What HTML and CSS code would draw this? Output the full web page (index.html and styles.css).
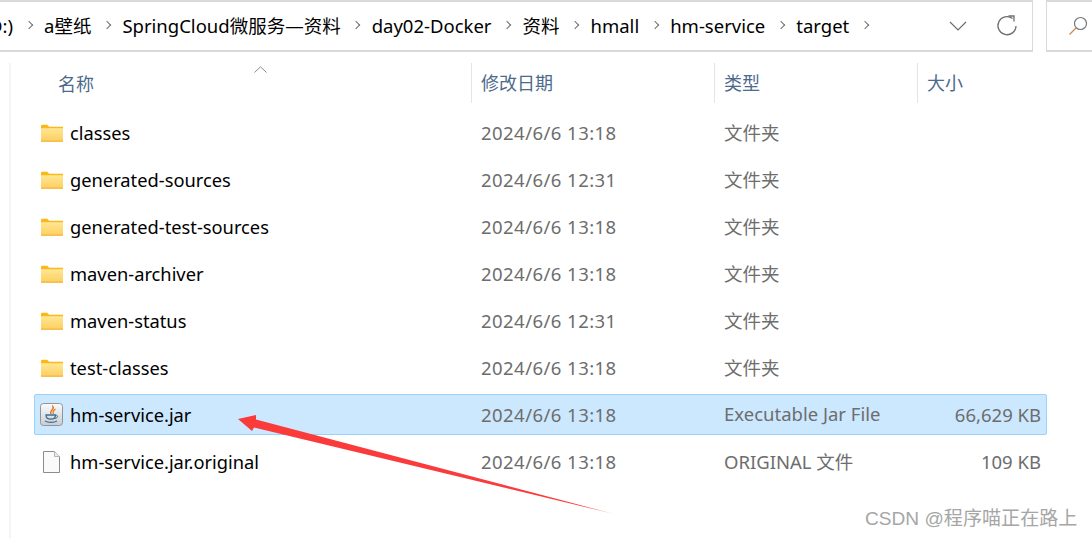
FILE: index.html
```html
<!DOCTYPE html>
<html lang="zh-CN">
<head>
    <meta charset="UTF-8">
    <title>target</title>
    <link rel="stylesheet" href="styles.css">
</head>
<body>
    <svg width="0" height="0" class="defs">
        <defs>
            <linearGradient id="folderFill" x1="0" y1="0" x2="0" y2="1">
                <stop offset="0" stop-color="#ffe795"/>
                <stop offset="1" stop-color="#fdcf60"/>
            </linearGradient>
            <linearGradient id="jarFill" x1="0" y1="0" x2="0" y2="1">
                <stop offset="0" stop-color="#fbfbfb"/>
                <stop offset="1" stop-color="#c9cdd2"/>
            </linearGradient>
            <symbol id="folder" viewBox="0 0 23 18">
                <path d="M0 2 Q0 0.5 1.5 0.5 H6.5 L8.5 2.5 H23 V18 H0 Z" fill="#fbb917"/>
                <rect x="0" y="4" width="23" height="13.5" fill="url(#folderFill)"/>
                <rect x="0" y="17" width="23" height="1" fill="#f0b030"/>
            </symbol>
        </defs>
    </svg>

    <div class="toolbar">
        <div class="address">
            <div class="crumbs">
                <span>D:)</span><i class="sep"></i>
                <span>a壁纸</span><i class="sep"></i>
                <span>SpringCloud微服务—资料</span><i class="sep"></i>
                <span>day02-Docker</span><i class="sep"></i>
                <span>资料</span><i class="sep"></i>
                <span>hmall</span><i class="sep"></i>
                <span>hm-service</span><i class="sep"></i>
                <span>target</span><i class="sep"></i>
            </div>
            <svg class="chevron" width="18" height="10" viewBox="0 0 18 10"><path d="M1 1 L9 9 L17 1" fill="none" stroke="#6d6d6d" stroke-width="1.2"/></svg>
            <svg class="refresh" width="22" height="22" viewBox="0 0 22 22"><path d="M16.5 3.6 A9 9 0 1 0 20 11" fill="none" stroke="#6d6d6d" stroke-width="1.3"/><path d="M12.5 1 H18 V6.5" fill="none" stroke="#6d6d6d" stroke-width="1.3"/></svg>
        </div>
        <div class="search">
            <svg width="20" height="20" viewBox="0 0 20 20"><circle cx="12.5" cy="7.5" r="6" fill="none" stroke="#777" stroke-width="1.2"/><path d="M8 12 L1.5 18.5" stroke="#c98a55" stroke-width="1.3"/></svg>
        </div>
    </div>

    <div class="pane">
        <div class="head">
            <div class="col-name">名称<svg class="sort" width="13" height="7" viewBox="0 0 13 7"><path d="M0.5 6.5 L6.5 0.8 L12.5 6.5" fill="none" stroke="#8a8a8a"/></svg></div>
            <div class="col-date">修改日期</div>
            <div class="col-type">类型</div>
            <div class="col-size">大小</div>
        </div>

        <div class="row">
            <div class="col-name"><svg class="icon"><use href="#folder"/></svg>classes</div>
            <div class="col-date">2024/6/6 13:18</div>
            <div class="col-type">文件夹</div>
            <div class="col-size"></div>
        </div>
        <div class="row">
            <div class="col-name"><svg class="icon"><use href="#folder"/></svg>generated-sources</div>
            <div class="col-date">2024/6/6 12:31</div>
            <div class="col-type">文件夹</div>
            <div class="col-size"></div>
        </div>
        <div class="row">
            <div class="col-name"><svg class="icon"><use href="#folder"/></svg>generated-test-sources</div>
            <div class="col-date">2024/6/6 13:18</div>
            <div class="col-type">文件夹</div>
            <div class="col-size"></div>
        </div>
        <div class="row">
            <div class="col-name"><svg class="icon"><use href="#folder"/></svg>maven-archiver</div>
            <div class="col-date">2024/6/6 13:18</div>
            <div class="col-type">文件夹</div>
            <div class="col-size"></div>
        </div>
        <div class="row">
            <div class="col-name"><svg class="icon"><use href="#folder"/></svg>maven-status</div>
            <div class="col-date">2024/6/6 12:31</div>
            <div class="col-type">文件夹</div>
            <div class="col-size"></div>
        </div>
        <div class="row">
            <div class="col-name"><svg class="icon"><use href="#folder"/></svg>test-classes</div>
            <div class="col-date">2024/6/6 13:18</div>
            <div class="col-type">文件夹</div>
            <div class="col-size"></div>
        </div>
        <div class="row selected">
            <div class="col-name">
                <svg class="icon jar" viewBox="0 0 23 23">
                    <rect x="0.5" y="0.5" width="22" height="22" rx="3" fill="url(#jarFill)" stroke="#8f959c"/>
                    <path d="M12.5 2.5 C14.5 6 9.5 7 11 11 C9.5 7.5 15.5 7 12.5 2.5 Z" fill="#e2761b" stroke="#e2761b" stroke-width="1"/>
                    <path d="M15.5 6 C13 7.5 12.5 9 13.5 11" fill="none" stroke="#e2761b" stroke-width="1.2"/>
                    <path d="M6 12 H15.5 C15.5 15 14 16.2 10.8 16.2 C7.5 16.2 6 15 6 12 Z" fill="none" stroke="#3f6f92" stroke-width="1.3"/>
                    <path d="M15.5 12.5 C18.5 12 18.5 15 14.5 15.5" fill="none" stroke="#3f6f92"/>
                    <path d="M5 18 C8 19.8 14 19.8 17 18" fill="none" stroke="#3f6f92" stroke-width="1.3"/>
                </svg>
                hm-service.jar
            </div>
            <div class="col-date">2024/6/6 13:18</div>
            <div class="col-type">Executable Jar File</div>
            <div class="col-size">66,629 KB</div>
        </div>
        <div class="row">
            <div class="col-name">
                <svg class="icon doc" viewBox="0 0 17 22">
                    <path d="M0.5 0.5 H11.5 L16.5 5.5 V21.5 H0.5 Z" fill="#fafafa" stroke="#8c8c8c"/>
                    <path d="M11.5 0.5 V5.5 H16.5" fill="#ececec" stroke="#b5b5b5"/>
                </svg>
                hm-service.jar.original
            </div>
            <div class="col-date">2024/6/6 13:18</div>
            <div class="col-type">ORIGINAL 文件</div>
            <div class="col-size">109 KB</div>
        </div>
    </div>

    <svg class="arrow" width="1092" height="538" viewBox="0 0 1092 538">
        <defs>
            <linearGradient id="arrowFill" gradientUnits="userSpaceOnUse" x1="238" y1="419" x2="613" y2="514">
                <stop offset="0" stop-color="#fb3a3a"/>
                <stop offset="0.93" stop-color="#fb3c3c"/>
                <stop offset="1" stop-color="#ffa0a0"/>
            </linearGradient>
        </defs>
        <polygon points="238,419 256,415 256,419.5 614,514 254,427.5 252,431" fill="url(#arrowFill)"/>
    </svg>

    <div class="watermark">CSDN @程序喵正在路上</div>
</body>
</html>
```

FILE: styles.css
```css
html, body {
    margin: 0;
    padding: 0;
    height: 538px;
    overflow: hidden;
}
body {
    position: relative;
    display: flex;
    flex-direction: column;
    background: #fff;
    font-family: "Noto Sans", "Noto Sans CJK SC", sans-serif;
    font-size: 18.5px;
    color: #000;
}
.defs {
    position: absolute;
}
.toolbar {
    display: flex;
    flex: none;
    height: 52px;
    gap: 13px;
}
.address {
    display: flex;
    align-items: center;
    width: 1034px;
    margin-left: -1px;
    box-sizing: border-box;
    border: 1px solid #d9d9d9;
    border-top-width: 2px;
    border-bottom-width: 2px;
    flex: none;
}
.crumbs {
    display: flex;
    align-items: center;
    gap: 12.5px;
    flex: 1;
    margin-left: -11px;
    padding-bottom: 2px;
    overflow: hidden;
    white-space: nowrap;
}
.sep {
    box-sizing: border-box;
    flex: none;
    width: 6px;
    height: 6px;
    border-top: 1.5px solid #6e6e6e;
    border-right: 1.5px solid #6e6e6e;
    transform: rotate(45deg);
}
.chevron {
    margin-right: 29px;
}
.refresh {
    margin-right: 14px;
}
.search {
    flex: 1;
    display: flex;
    align-items: center;
    padding-left: 21px;
    border: 1px solid #d9d9d9;
    border-top-width: 2px;
    border-bottom-width: 2px;
    border-right: none;
}
.pane {
    flex: 1;
    margin-left: 9px;
    margin-top: 11px;
    padding-left: 23px;
    border-left: 2px solid #f4f4f4;
    width: 1013px;
}
.head, .row {
    display: grid;
    grid-template-columns: 437px 243px 203px 1fr;
    align-items: center;
}
.head {
    height: 40px;
    margin-bottom: 9px;
    color: #4c6a8c;
    font-size: 18px;
    width: 1018px;
    grid-template-columns: 437px 243px 203px 135px;
}
.head .col-name {
    position: relative;
    padding-left: 24px;
    font-size: 18px;
    color: #4c6a8c;
}
.head .col-date, .head .col-type, .head .col-size {
    border-left: 1px solid #e5e5e5;
    padding-left: 9px;
    line-height: 40px;
}
.sort {
    position: absolute;
    left: 220px;
    top: -4px;
}
.row {
    height: 41px;
    margin-bottom: 6px;
    box-sizing: border-box;
    color: #6d6d6d;
    border: 1px solid transparent;
}
.row.selected {
    background: #cce8ff;
    border-color: #99d1ff;
    border-radius: 2px;
}
.col-name {
    display: flex;
    align-items: center;
    font-size: 18.3px;
    color: #000;
}
.row .col-name {
    padding-left: 5px;
}
.row .col-date {
    padding-left: 10px;
    margin-left: -1px;
    letter-spacing: 0.45px;
}
.row .col-type {
    padding-left: 9px;
    padding-bottom: 2px;
}
.row .col-size {
    text-align: right;
    padding-right: 5px;
}
.icon {
    width: 22px;
    height: 18px;
    margin-left: 1px;
    margin-right: 7px;
    flex: none;
}
.icon.jar {
    width: 23px;
    height: 23px;
    margin-left: 0;
}
.icon.doc {
    width: 17px;
    height: 22px;
    margin-left: 3px;
    margin-right: 10px;
}
.arrow {
    position: absolute;
    left: 0;
    top: 0;
    pointer-events: none;
}
.watermark {
    position: absolute;
    left: 865px;
    top: 506px;
    color: #a6a6a6;
    font-family: "Liberation Sans", "Noto Sans CJK SC", sans-serif;
    font-size: 19.1px;
    line-height: 26px;
    white-space: nowrap;
}
```
